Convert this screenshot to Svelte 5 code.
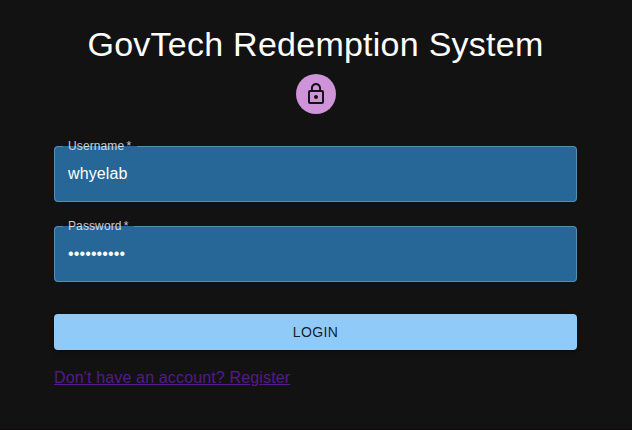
<script>
  let username = $state('whyelab');
  let password = $state('redeem1234');
</script>

<main>
  <h1>GovTech Redemption System</h1>
  <div class="avatar">
    <svg viewBox="0 0 24 24" aria-hidden="true">
      <path d="M12 17c1.1 0 2-.9 2-2s-.9-2-2-2-2 .9-2 2 .9 2 2 2zm6-9h-1V6c0-2.76-2.24-5-5-5S7 3.24 7 6v2H6c-1.1 0-2 .9-2 2v10c0 1.1.9 2 2 2h12c1.1 0 2-.9 2-2V10c0-1.1-.9-2-2-2zM8.9 6c0-1.71 1.39-3.1 3.1-3.1s3.1 1.39 3.1 3.1v2H8.9V6zM18 20H6V10h12v10z" />
    </svg>
  </div>
  <form onsubmit={(e) => e.preventDefault()}>
    <div class="field">
      <label for="username">Username *</label>
      <input id="username" type="text" bind:value={username} />
      <fieldset aria-hidden="true"><legend class="wide"></legend></fieldset>
    </div>
    <div class="field">
      <label for="password">Password *</label>
      <input id="password" type="password" bind:value={password} />
      <fieldset aria-hidden="true"><legend></legend></fieldset>
    </div>
    <button type="submit">LOGIN</button>
  </form>
  <a href="#register">Don't have an account? Register</a>
</main>

<style>
  :global(body) {
    margin: 0;
    background: #121212;
  }
  main {
    box-sizing: border-box;
    height: 430px;
    padding: 23px 55px 0 54px;
    display: flex;
    flex-direction: column;
    align-items: center;
    overflow: hidden;
    background: #121212;
    border-bottom: 1px solid #0d090c;
    color: #fff;
    font-family: "Liberation Sans", Arial, sans-serif;
  }
  h1 {
    margin: 0;
    font-size: 34px;
    font-weight: 400;
    line-height: 42px;
    letter-spacing: 0.25px;
    white-space: nowrap;
  }
  .avatar {
    width: 40px;
    height: 40px;
    margin-top: 9px;
    border-radius: 50%;
    background: #ce93d8;
    display: flex;
    align-items: center;
    justify-content: center;
  }
  svg {
    width: 24px;
    height: 24px;
    fill: #121212;
  }
  form {
    width: 100%;
    margin-top: 32px;
    display: flex;
    flex-direction: column;
  }
  .field {
    position: relative;
    height: 56px;
    margin-bottom: 24px;
    border-radius: 4px;
    background: #266798;
  }
  label {
    position: absolute;
    z-index: 1;
    left: 14px;
    top: -8px;
    font-size: 12px;
    line-height: 17px;
    letter-spacing: 0.11px;
    word-spacing: -1.3px;
    color: rgba(255, 255, 255, 0.78);
  }
  input {
    box-sizing: border-box;
    width: 100%;
    height: 56px;
    padding: 16px 14px;
    border: 0;
    outline: 0;
    background: transparent;
    color: #fff;
    font: 16px "Liberation Sans", Arial, sans-serif;
    letter-spacing: 0.12px;
  }
  fieldset {
    position: absolute;
    inset: -5px 0 0;
    margin: 0;
    padding: 0 8px;
    border: 1px solid #5a8cb1;
    border-radius: 4px;
    pointer-events: none;
  }
  legend {
    width: 71px;
    height: 11px;
    padding: 0;
  }
  .wide {
    width: 74px;
  }
  button {
    height: 36px;
    margin-top: 8px;
    padding: 0;
    border: 0;
    border-radius: 4px;
    background: #90caf9;
    color: rgba(0, 0, 0, 0.87);
    font: 14px "Liberation Sans", Arial, sans-serif;
    letter-spacing: 0.4px;
    box-shadow: 0 3px 1px -2px rgba(0, 0, 0, 0.2), 0 2px 2px rgba(0, 0, 0, 0.14), 0 1px 5px rgba(0, 0, 0, 0.12);
  }
  a {
    align-self: flex-start;
    margin-top: 19px;
    font-size: 16px;
    line-height: 18px;
    letter-spacing: 0.15px;
    color: #551a8b;
    text-decoration: underline;
  }
</style>
